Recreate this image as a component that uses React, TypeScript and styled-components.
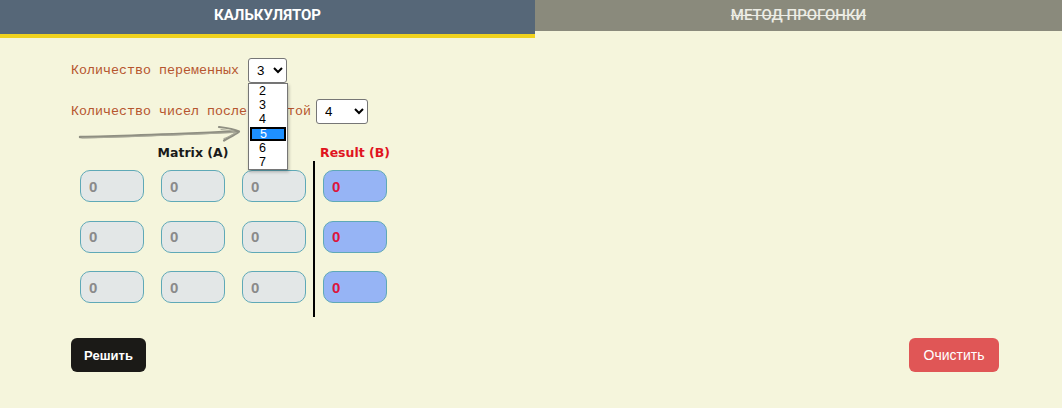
import React from "react";
import styled, { createGlobalStyle } from "styled-components";

const Global = createGlobalStyle`
  html, body { margin: 0; padding: 0; background: #f5f5dc; }
  body { font-family: "Liberation Sans", Arial, sans-serif; }
  * { box-sizing: border-box; }
`;

const Page = styled.div`
  width: 1062px;
  height: 408px;
  background: #f5f5dc;
  overflow: hidden;
`;

const Tabs = styled.div`
  display: flex;
  align-items: flex-start;
`;

const Tab = styled.div<{ $active?: boolean }>`
  flex: 0 0 ${(p) => (p.$active ? "535px" : "527px")};
  height: ${(p) => (p.$active ? "38px" : "31px")};
  padding-top: 6px;
  background: ${(p) => (p.$active ? "#566778" : "#8a8a7c")};
  border-bottom: ${(p) => (p.$active ? "4px solid #f0d21e" : "none")};
  color: ${(p) => (p.$active ? "#ffffff" : "#ecece4")};
  font-family: Roboto, "Liberation Sans", sans-serif;
  font-weight: ${(p) => (p.$active ? 700 : 500)};
  font-size: 15px;
  line-height: 18px;
  text-align: center;
  text-decoration: ${(p) => (p.$active ? "none" : "line-through")};
`;

const Main = styled.div`
  position: relative;
  padding: 20px 63px 0 71px;
`;

const FieldRow = styled.div<{ $mt?: number }>`
  display: flex;
  align-items: center;
  height: 25px;
  margin-top: ${(p) => p.$mt ?? 0}px;
`;

const Label = styled.span<{ $gap: number }>`
  font-family: "Courier New", "Liberation Mono", "DejaVu Sans Mono", monospace;
  font-size: 13.33px;
  color: #b5552e;
  margin-right: ${(p) => p.$gap}px;
  white-space: pre;
`;

const SelectWrap = styled.div`
  position: relative;
`;

const Select = styled.select<{ $w: number }>`
  width: ${(p) => p.$w}px;
  height: 25px;
  font-family: "Liberation Sans", Arial, sans-serif;
  font-size: 13.33px;
  color: #000;
  background: #fff;
  border: 1px solid #767676;
  border-radius: 3px;
  padding: 0 2px 0 4px;
`;

const DropList = styled.div`
  position: absolute;
  top: 25px;
  left: 0;
  width: 40px;
  height: 87px;
  background: #fff;
  border: 1px solid #767676;
  box-shadow: 1px 2px 3px rgba(0, 0, 0, 0.25);
  z-index: 5;
`;

const DropItem = styled.div<{ $sel?: boolean }>`
  height: 14.2px;
  line-height: ${(p) => (p.$sel ? "10px" : "14px")};
  padding-left: ${(p) => (p.$sel ? "8px" : "10px")};
  font-family: "Liberation Sans", Arial, sans-serif;
  font-size: 12.5px;
  color: ${(p) => (p.$sel ? "#fff" : "#000")};
  background: ${(p) => (p.$sel ? "#1e90ff" : "transparent")};
  border: ${(p) => (p.$sel ? "2px solid #000" : "none")};
  margin: ${(p) => (p.$sel ? "0 1px" : "0")};
`;

const Arrow = styled.svg`
  position: absolute;
  left: 78px;
  top: 87px;
  overflow: visible;
`;

const Section = styled.div`
  margin-left: 9px;
  margin-top: 19px;
`;

const HeadRow = styled.div`
  display: flex;
  height: 18px;
  align-items: center;
`;

const Head = styled.div<{ $w: number; $color: string; $ml?: number }>`
  width: ${(p) => p.$w}px;
  margin-left: ${(p) => p.$ml ?? 0}px;
  text-align: center;
  white-space: nowrap;
  display: flex;
  justify-content: center;
  font-family: "Comic Sans MS", "DejaVu Sans", sans-serif;
  font-weight: 700;
  font-size: 12.5px;
  color: ${(p) => p.$color};
`;

const Body = styled.div`
  display: flex;
  align-items: stretch;
`;

const Grid = styled.div<{ $cols: number }>`
  display: grid;
  grid-template-columns: repeat(${(p) => p.$cols}, 64px);
  column-gap: 17px;
  row-gap: 18.5px;
  padding: 9px 0 14px;
`;

const Divider = styled.div`
  width: 2px;
  background: #000;
  margin: 0 8px 0 7px;
`;

const Cell = styled.input<{ $result?: boolean }>`
  width: 64px;
  height: 32px;
  border: 1px solid #5fa9b7;
  border-radius: 10px;
  background: ${(p) => (p.$result ? "#96b4f5" : "#e3e7e7")};
  color: ${(p) => (p.$result ? "#dc143c" : "#8a8a8a")};
  font-family: "Liberation Sans", Arial, sans-serif;
  font-weight: 700;
  font-size: 15px;
  padding: 0 0 0 8px;
  outline: none;
`;

const Actions = styled.div`
  display: flex;
  justify-content: space-between;
  margin-top: 21px;
`;

const Button = styled.button<{ $variant: "dark" | "danger" }>`
  height: 34px;
  width: ${(p) => (p.$variant === "dark" ? "75px" : "90px")};
  border: none;
  border-radius: 6px;
  background: ${(p) => (p.$variant === "dark" ? "#1b1a17" : "#e05656")};
  color: #fff;
  font-family: "Liberation Sans", Arial, sans-serif;
  font-weight: ${(p) => (p.$variant === "dark" ? 700 : 400)};
  font-size: ${(p) => (p.$variant === "dark" ? "13px" : "14px")};
  padding: 0;
`;

const options = [2, 3, 4, 5, 6, 7];

export default function App() {
  const n = 3;
  const cells = Array.from({ length: n * n });
  return (
    <Page>
      <Global />
      <Tabs>
        <Tab $active>КАЛЬКУЛЯТОР</Tab>
        <Tab>МЕТОД ПРОГОНКИ</Tab>
      </Tabs>
      <Main>
        <FieldRow>
          <Label $gap={9}>Количество переменных</Label>
          <SelectWrap>
            <Select $w={39} defaultValue="3">
              {options.map((o) => (
                <option key={o} value={o}>
                  {o}
                </option>
              ))}
            </Select>
            <DropList>
              {options.map((o) => (
                <DropItem key={o} $sel={o === 5}>
                  {o}
                </DropItem>
              ))}
            </DropList>
          </SelectWrap>
        </FieldRow>
        <FieldRow $mt={16}>
          <Label $gap={5}>Количество чисел после запятой</Label>
          <Select $w={52} defaultValue="4">
            {[1, 2, 3, 4, 5, 6].map((o) => (
              <option key={o} value={o}>
                {o}
              </option>
            ))}
          </Select>
        </FieldRow>
        <Arrow width="170" height="20" viewBox="0 0 170 20">
          <path
            d="M2 12 C 40 11.5, 90 9.5, 159 6.5"
            fill="none"
            stroke="#8f8f82"
            strokeWidth="2.4"
            strokeLinecap="round"
          />
          <path
            d="M4 13 C 50 12, 100 10, 157 7.5"
            fill="none"
            stroke="#a9a99a"
            strokeWidth="1.2"
            strokeLinecap="round"
          />
          <path
            d="M141 2 C 150 3, 157 4.5, 161 6.5 C 157 9.5, 151 12.5, 146 15.5"
            fill="none"
            stroke="#8f8f82"
            strokeWidth="2.2"
            strokeLinecap="round"
            strokeLinejoin="round"
          />
          <path
            d="M143 4.5 C 150 5, 155 6, 158 7.5 C 154 10, 150 12.5, 146 13.5"
            fill="none"
            stroke="#a9a99a"
            strokeWidth="1.1"
            strokeLinecap="round"
          />
        </Arrow>
        <Section>
          <HeadRow>
            <Head $w={226} $color="#1a1a1a">
              Matrix (A)
            </Head>
            <Head $w={64} $ml={17} $color="#e0141e">
              Result (B)
            </Head>
          </HeadRow>
          <Body>
            <Grid $cols={n}>
              {cells.map((_, i) => (
                <Cell key={i} defaultValue="0" />
              ))}
            </Grid>
            <Divider />
            <Grid $cols={1}>
              {Array.from({ length: n }).map((_, i) => (
                <Cell key={i} $result defaultValue="0" />
              ))}
            </Grid>
          </Body>
        </Section>
        <Actions>
          <Button $variant="dark">Решить</Button>
          <Button $variant="danger">Очистить</Button>
        </Actions>
      </Main>
    </Page>
  );
}
